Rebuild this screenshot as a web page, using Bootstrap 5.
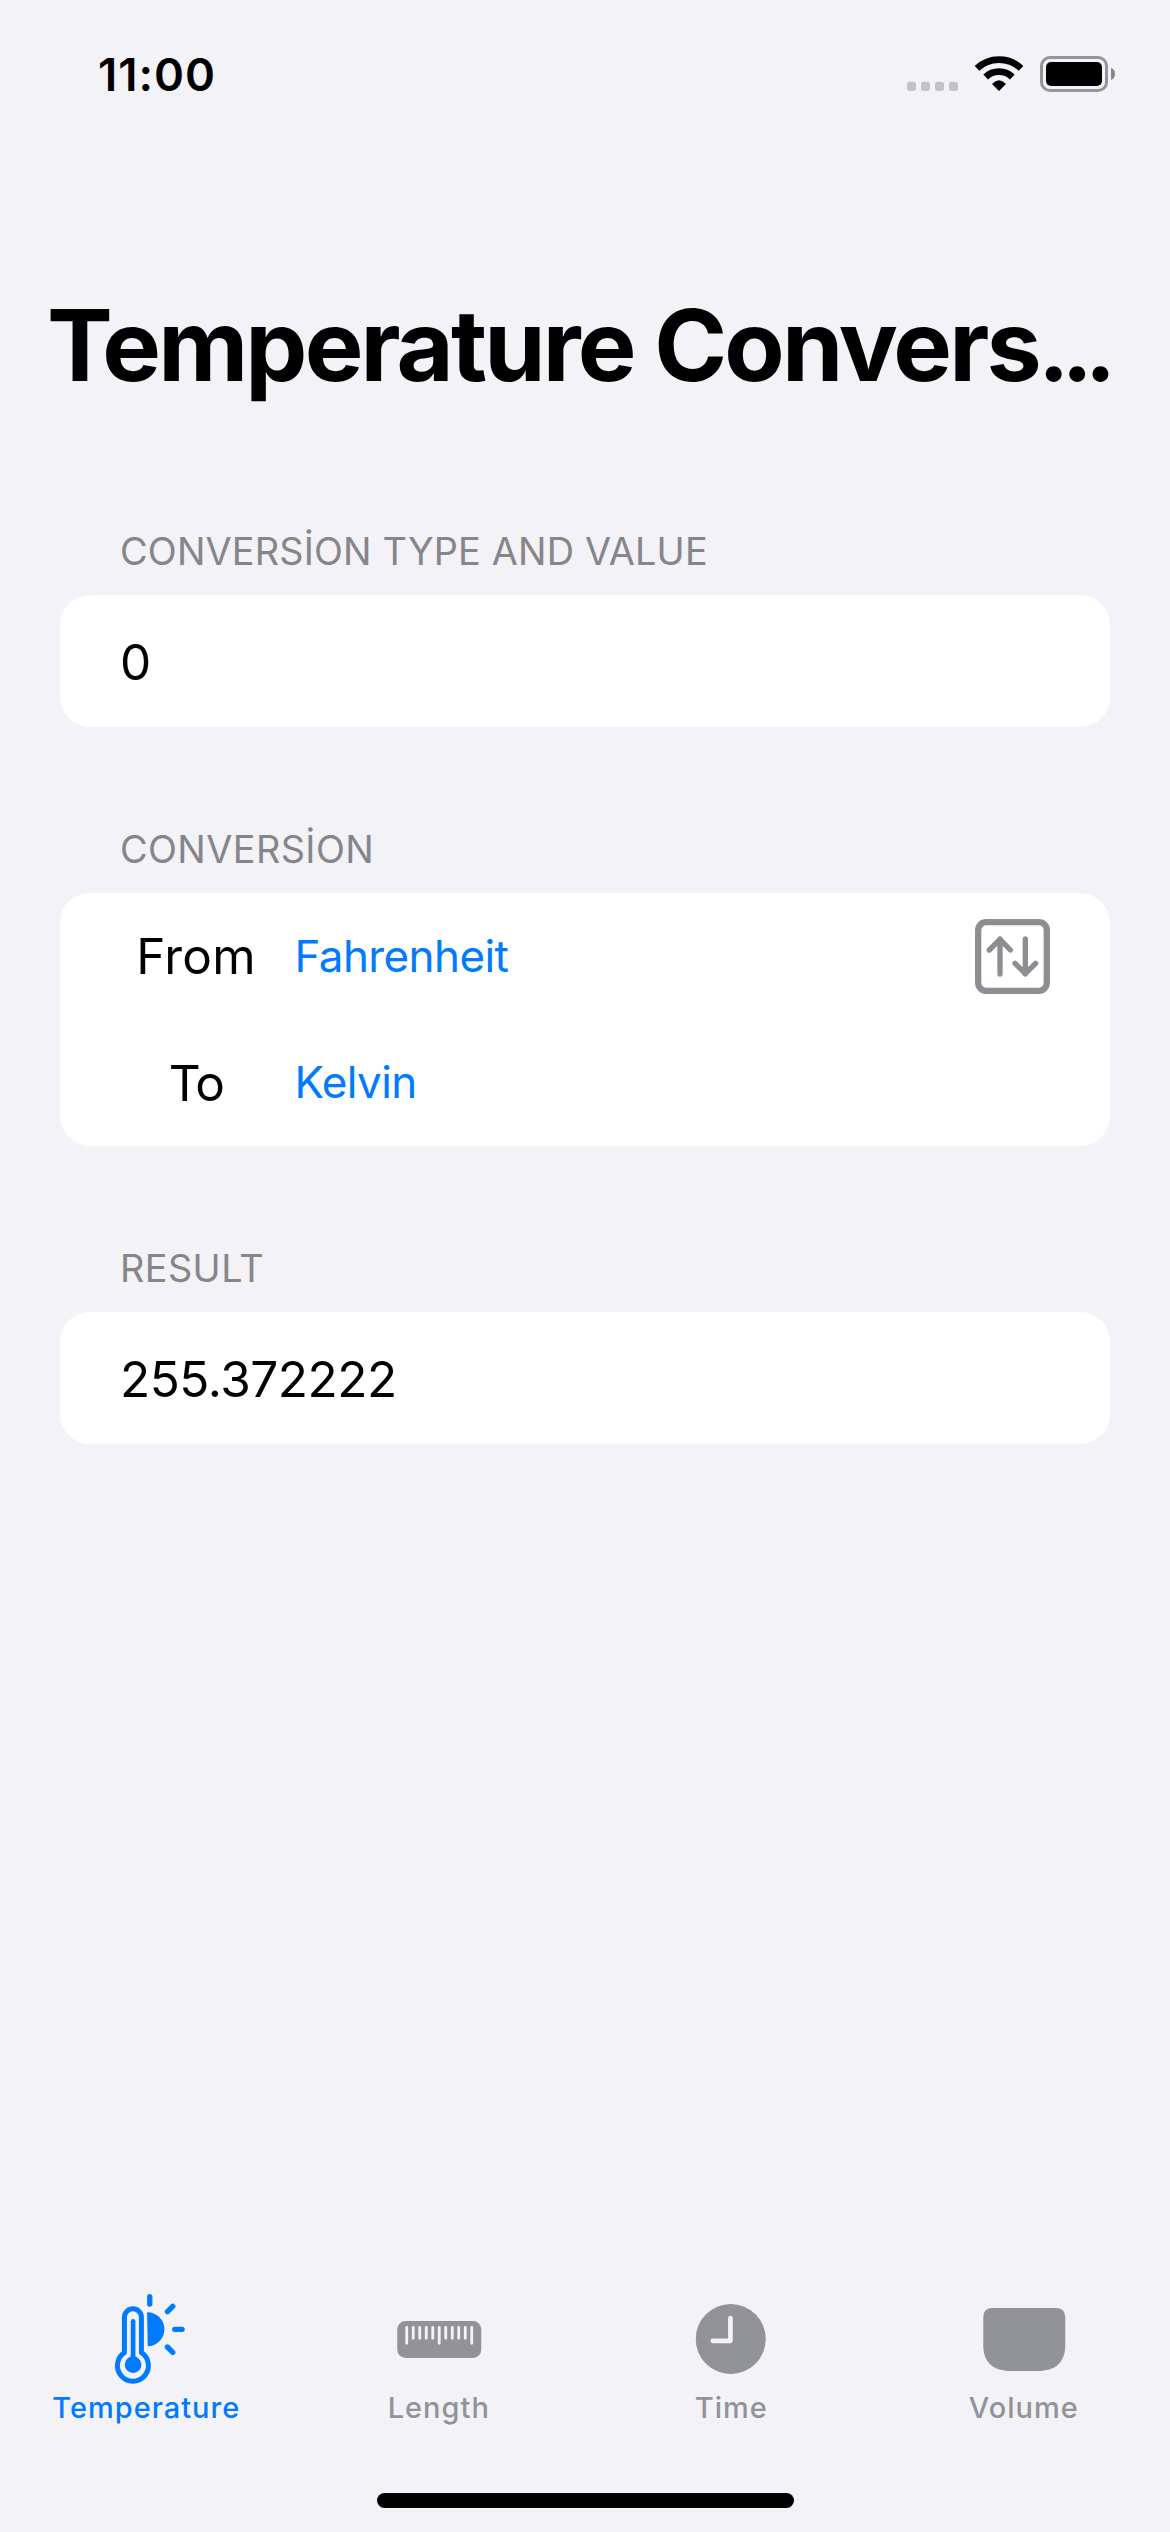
<!DOCTYPE html>
<html lang="en">
<head>
<meta charset="utf-8">
<meta name="viewport" content="width=device-width, initial-scale=1">
<title>Temperature Conversion</title>
<link href="https://cdn.jsdelivr.net/npm/bootstrap@5.3.0/dist/css/bootstrap.min.css" rel="stylesheet">
<style>
  body { background: #f2f2f7; color: #000; font-family: Inter, "Liberation Sans", sans-serif; }
  svg { display: block; }
  .screen { height: 2532px; overflow: hidden; }
  .status-bar { height: 149px; padding: 0 50px 0 98px; }
  .clock { font-size: 45.5px; font-weight: 600; letter-spacing: 1px; line-height: 60px; }
  .page-title { margin: 136px 0 122px 47px; font-size: 98.6px; font-weight: 700; line-height: 120px; letter-spacing: -2.82px; white-space: nowrap; }
  .page-title .dots { margin-left: -1px; font-size: 94px; letter-spacing: -8px; line-height: 1; }
  .group { margin: 0 60px 98px; }
  .group-label { margin: 0 0 20px 60px; font-size: 37.8px; font-weight: 400; line-height: 48px; color: #86858a; letter-spacing: .43px; }
  .group-label.tight { letter-spacing: .19px; }
  .group-card { background: #fff; border-radius: 30px; padding: 0 60px; font-size: 49.5px; }
  .field { height: 132px; padding-top: 2px; letter-spacing: -.46px; }
  .unit-row { height: 126.5px; }
  .unit-name { width: 152px; letter-spacing: .2px; }
  .unit-name.short { letter-spacing: -1.6px; }
  .unit-pick { margin-left: 22.5px; font-size: 44px; letter-spacing: -.6px; color: #007aff; text-decoration: none; }
  .unit-pick.raised { padding-bottom: 2px; }
  .tabs { color: #929397; padding-bottom: 68px; }
  .tab { font-size: 29px; font-weight: 500; line-height: 35px; letter-spacing: 1px; color: inherit; text-decoration: none; }
  .tab.active { color: #007aff; }
  .home-bar { width: 417px; height: 15px; border-radius: 8px; background: #000; margin-bottom: 24px; }
</style>
<script src="https://cdn.jsdelivr.net/npm/bootstrap@5.3.0/dist/js/bootstrap.bundle.min.js"></script>
</head>
<body>
<div class="screen d-flex flex-column">
  <header class="status-bar d-flex align-items-center justify-content-between">
    <span class="clock">11:00</span>
    <svg width="220" height="49" viewBox="60 60 660 147">
      <g fill="#c3c2c7"><rect x="81" y="155" width="27" height="28" rx="8"/><rect x="123" y="155" width="27" height="28" rx="8"/><rect x="165" y="155" width="27" height="28" rx="8"/><rect x="207" y="155" width="27" height="28" rx="8"/></g>
      <g fill="none" stroke="#000" stroke-width="20"><path d="M291 115A96 96 0 0 1 423 115"/><path d="M317 141A58 58 0 0 1 397 141"/></g>
      <path d="M336 162Q357 140 378 162L357 183Z"/>
      <rect x="484.500" y="82.500" width="195" height="99" rx="25" fill="none" stroke="#959498" stroke-width="9"/>
      <rect x="498" y="96" width="168" height="72" rx="15"/>
      <path d="M693 114Q705 118 705 132T693 150Z" fill="#87868a"/>
    </svg>
  </header>

  <h1 class="page-title">Temperature Convers<span class="dots">...</span></h1>

  <section class="group">
    <h2 class="group-label tight">CONVERSİON TYPE AND VALUE</h2>
    <div class="group-card"><div class="field d-flex align-items-center">0</div></div>
  </section>

  <section class="group">
    <h2 class="group-label">CONVERSİON</h2>
    <div class="group-card">
      <div class="unit-row d-flex align-items-center">
        <span class="unit-name text-center">From</span>
        <a class="unit-pick" href="#">Fahrenheit</a>
        <svg class="ms-auto" width="75" height="75" viewBox="0 0 225 225" fill="none" stroke="#8e8d92" stroke-linecap="round" stroke-linejoin="round">
          <rect x="9.500" y="9.500" width="206" height="206" rx="24" stroke-width="19"/>
          <path d="M75 165V60M43 93L75 61L106 93M151 60V165M120 133L151 164L182 133" stroke-width="16"/>
        </svg>
      </div>
      <div class="unit-row d-flex align-items-center">
        <span class="unit-name short text-center">To</span>
        <a class="unit-pick raised" href="#">Kelvin</a>
      </div>
    </div>
  </section>

  <section class="group mb-0">
    <h2 class="group-label">RESULT</h2>
    <div class="group-card"><div class="field d-flex align-items-center">255.372222</div></div>
  </section>

  <nav class="tabs row g-0 mt-auto">
    <a class="tab active col d-flex flex-column align-items-center" href="#">
      <svg width="100" height="100" viewBox="168.750 30 300 300">
        <g fill="none" stroke="#007aff" stroke-linecap="round">
          <path d="M254 218V112A25.500 25.500 0 0 1 305 112V218A46.500 46.500 0 1 1 254 218Z" stroke-width="15" stroke-linejoin="round"/>
          <path d="M280 124V240" stroke-width="14"/>
          <path d="M330 50V72M383 95L399 79M405 148H427M383 201L399 217" stroke-width="16"/>
        </g>
        <circle cx="280" cy="254" r="25" fill="#007aff"/>
        <path d="M322 97A51 51 0 0 1 324 199Z" fill="#007aff"/>
      </svg>
      <span>Temperature</span>
    </a>
    <a class="tab col d-flex flex-column align-items-center" href="#">
      <svg width="100" height="100" viewBox="56.250 30 300 300">
        <rect x="81" y="123" width="252" height="111" rx="25" fill="#929397"/>
        <path d="M109.500 142V190M207 142V190M304.500 142V190M129 142V175M148.500 142V175M168 142V175M187.500 142V175M226.500 142V175M246 142V175M265.500 142V175M285 142V175" stroke="#f2f2f7" stroke-width="8.500" stroke-linecap="round"/>
      </svg>
      <span>Length</span>
    </a>
    <a class="tab col d-flex flex-column align-items-center" href="#">
      <svg width="100" height="100" viewBox="33.750 30 300 300">
        <circle cx="183" cy="177" r="105" fill="#929397"/>
        <path d="M182 114V182.500H129" fill="none" stroke="#f2f2f7" stroke-width="14" stroke-linecap="round" stroke-linejoin="round"/>
      </svg>
      <span>Time</span>
    </a>
    <a class="tab col d-flex flex-column align-items-center" href="#">
      <svg width="100" height="100" viewBox="71.250 30 300 300">
        <path d="M99 112Q99 84 127 84H317Q345 84 345 112V195C345 248 315 273 262 273H182C129 273 99 248 99 195Z" fill="#929397"/>
      </svg>
      <span>Volume</span>
    </a>
  </nav>
  <div class="home-bar align-self-center flex-shrink-0"></div>
</div>
</body>
</html>
